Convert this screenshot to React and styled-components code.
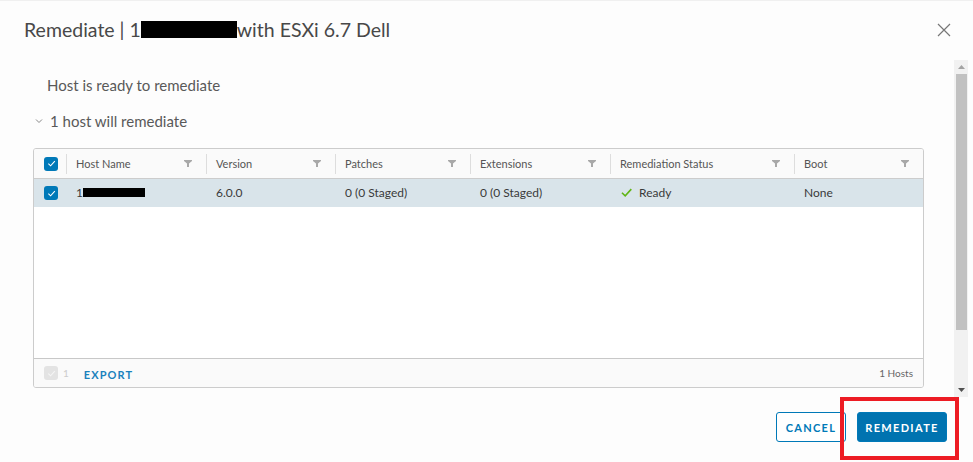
import React from 'react';
import styled, { createGlobalStyle } from 'styled-components';

const GlobalStyle = createGlobalStyle`
	html, body {
		margin: 0;
		padding: 0;
		background: #fdfdfd;
		font-family: Lato, 'Noto Sans', sans-serif;
	}
`;

const Modal = styled.div`
	position: relative;
	width: 973px;
	height: 462px;
	display: flex;
	flex-flow: column;
	background: #fdfdfd;
	border-top: 1px solid #f0f0f0;
	box-sizing: border-box;
`;

const Header = styled.div`
	height: 59px;
	display: flex;
	align-items: center;
	justify-content: space-between;
	padding: 0 22px 0 24px;
	box-sizing: border-box;
`;

const Title = styled.h1`
	margin: 0 0 2px 0;
	font-size: 19.5px;
	font-weight: 400;
	color: #484848;
	display: flex;
	align-items: center;
`;

const Redacted = styled.span`
	display: inline-block;
	width: ${(p) => p.w}px;
	height: ${(p) => p.h}px;
	background: #000;
`;

const CloseButton = styled.button`
	border: none;
	background: none;
	padding: 0;
	width: 14px;
	height: 14px;
	display: flex;
	margin-bottom: 2px;
`;

const Body = styled.div`
	height: 337px;
	display: flex;
	flex-flow: row;
`;

const Content = styled.div`
	flex: 1;
	padding: 17px 30px 0 33px;
	display: flex;
	flex-flow: column;
`;

const Message = styled.p`
	margin: 0 0 20px 14px;
	font-size: 15px;
	line-height: 16px;
	color: #595959;
`;

const Toggle = styled.div`
	display: flex;
	align-items: center;
	gap: 7px;
	font-size: 15px;
	line-height: 16px;
	color: #595959;
	margin: 0 0 19px 2px;
`;

const Table = styled.div`
	height: 240px;
	border: 1px solid #ccc;
	border-radius: 3px;
	display: flex;
	flex-flow: column;
	box-sizing: border-box;
	overflow: hidden;
`;

const Row = styled.div`
	display: grid;
	grid-template-columns: 32px 140px 129px 135px 140px 184px 1fr;
	height: ${(p) => (p.head ? 29 : 28)}px;
	background: ${(p) => (p.head ? '#fafafa' : p.selected ? '#d9e4ea' : '#fff')};
	border-bottom: ${(p) => (p.head ? '1px solid #ccc' : 'none')};
	flex-shrink: 0;
`;

const Cell = styled.div`
	position: relative;
	display: flex;
	align-items: center;
	justify-content: ${(p) => (p.check ? 'center' : 'space-between')};
	padding: ${(p) => (p.check ? '0 0 0 2px' : p.head ? '0 14px 0 10px' : '0 14px 2px 10px')};
	font-size: ${(p) => (p.head ? 11 : 12)}px;
	color: ${(p) => (p.head ? '#555' : '#3a3a3a')};
	gap: 6px;
	&::before {
		content: '';
		display: ${(p) => (p.head && !p.check ? 'block' : 'none')};
		position: absolute;
		left: 0;
		top: 5px;
		bottom: 4px;
		width: 1px;
		background: #ddd;
	}
`;

const CellText = styled.span`
	display: flex;
	align-items: center;
	gap: ${(p) => p.gap ?? 6}px;
`;

const Box = styled.span`
	width: 14px;
	height: 14px;
	border-radius: 3px;
	background: ${(p) => (p.disabled ? '#e3e3e3' : '#0079b8')};
	display: flex;
	align-items: center;
	justify-content: center;
`;

const Empty = styled.div`
	flex: 1;
	background: #fff;
`;

const TableFooter = styled.div`
	height: 29px;
	border-top: 1px solid #c8c8c8;
	background: #fafafa;
	display: flex;
	align-items: center;
	padding: 0 10px 0 10px;
	flex-shrink: 0;
	box-sizing: border-box;
`;

const Count = styled.span`
	font-size: 10px;
	color: #ccc;
	margin: 0 15px 0 5px;
`;

const LinkButton = styled.span`
	font-size: 11px;
	font-weight: 700;
	letter-spacing: 0.1em;
	color: #1a82bd;
	margin-top: 2px;
`;

const Hosts = styled.span`
	margin-left: auto;
	font-size: 10px;
	color: #666;
`;

const Scrollbar = styled.div`
	width: 14px;
	margin: 0 5px 0 0;
	background: #f1f1f1;
	display: flex;
	flex-flow: column;
	align-items: center;
`;

const Arrow = styled.div`
	height: 14px;
	display: flex;
	align-items: center;
	justify-content: center;
	width: 100%;
`;

const Thumb = styled.div`
	width: 11px;
	height: 256px;
	background: #c1c1c1;
`;

const Track = styled.div`
	flex: 1;
`;

const Footer = styled.div`
	flex: 1;
	display: flex;
	justify-content: flex-end;
	align-items: flex-start;
	gap: 11px;
	padding: 15px 26px 0 0;
`;

const Button = styled.button`
	height: 30px;
	width: ${(p) => p.w}px;
	border-radius: 3px;
	border: 1px solid #0079b8;
	background: ${(p) => (p.primary ? '#0073b0' : '#fff')};
	color: ${(p) => (p.primary ? '#fff' : '#0079b8')};
	font-family: Lato, 'Noto Sans', sans-serif;
	font-size: 11px;
	font-weight: 700;
	letter-spacing: 0.12em;
	padding: 0;
`;

const Highlight = styled.div`
	position: absolute;
	left: 840px;
	top: 396px;
	width: 119px;
	height: 63px;
	border: 4px solid #ed1c24;
	box-sizing: border-box;
	pointer-events: none;
`;

const Check = ({ color = '#fff', size = 9 }) => (
	<svg width={size} height={size} viewBox='0 0 10 10'>
		<path d='M1.5 5.2 L4 7.6 L8.7 2.4' fill='none' stroke={color} strokeWidth='1.2' />
	</svg>
);

const Filter = () => (
	<svg width='8' height='7' viewBox='0 0 8 7'>
		<path d='M0 0 H8 V1 L5 3.5 V7 H3 V3.5 L0 1 Z' fill='#a8a8a8' />
	</svg>
);

const columns = ['Host Name', 'Version', 'Patches', 'Extensions', 'Remediation Status', 'Boot'];

function App() {
	return (
		<Modal>
			<GlobalStyle />
			<Header>
				<Title>
					Remediate | 1<Redacted w={96} h={17} />
					with ESXi 6.7 Dell
				</Title>
				<CloseButton aria-label='close'>
					<svg width='14' height='14' viewBox='0 0 14 14'>
						<path d='M1 1 L13 13 M13 1 L1 13' stroke='#777' strokeWidth='1.2' />
					</svg>
				</CloseButton>
			</Header>
			<Body>
				<Content>
					<Message>Host is ready to remediate</Message>
					<Toggle>
						<svg width='8' height='6' viewBox='0 0 8 6'>
							<path d='M1 1.5 L4 4.5 L7 1.5' fill='none' stroke='#888' strokeWidth='1' />
						</svg>
						1 host will remediate
					</Toggle>
					<Table>
						<Row head>
							<Cell head check>
								<Box>
									<Check />
								</Box>
							</Cell>
							{columns.map((c) => (
								<Cell head key={c}>
									{c}
									<Filter />
								</Cell>
							))}
						</Row>
						<Row selected>
							<Cell check>
								<Box>
									<Check />
								</Box>
							</Cell>
							<Cell>
								<CellText gap={0}>
									1<Redacted w={62} h={9} />
								</CellText>
							</Cell>
							<Cell>6.0.0</Cell>
							<Cell>0 (0 Staged)</Cell>
							<Cell>0 (0 Staged)</Cell>
							<Cell>
								<CellText>
									<Check color='#60b515' size={13} />
									Ready
								</CellText>
							</Cell>
							<Cell>None</Cell>
						</Row>
						<Empty />
						<TableFooter>
							<Box disabled>
								<Check color='#f5f5f5' />
							</Box>
							<Count>1</Count>
							<LinkButton>EXPORT</LinkButton>
							<Hosts>1 Hosts</Hosts>
						</TableFooter>
					</Table>
				</Content>
				<Scrollbar>
					<Arrow>
						<svg width='7' height='4' viewBox='0 0 7 4'>
							<path d='M0 4 L3.5 0 L7 4 Z' fill='#a3a3a3' />
						</svg>
					</Arrow>
					<Thumb />
					<Track />
					<Arrow>
						<svg width='7' height='4' viewBox='0 0 7 4'>
							<path d='M0 0 L3.5 4 L7 0 Z' fill='#505050' />
						</svg>
					</Arrow>
				</Scrollbar>
			</Body>
			<Footer>
				<Button w={70}>CANCEL</Button>
				<Button primary w={90}>
					REMEDIATE
				</Button>
			</Footer>
			<Highlight />
		</Modal>
	);
}

export default App;
